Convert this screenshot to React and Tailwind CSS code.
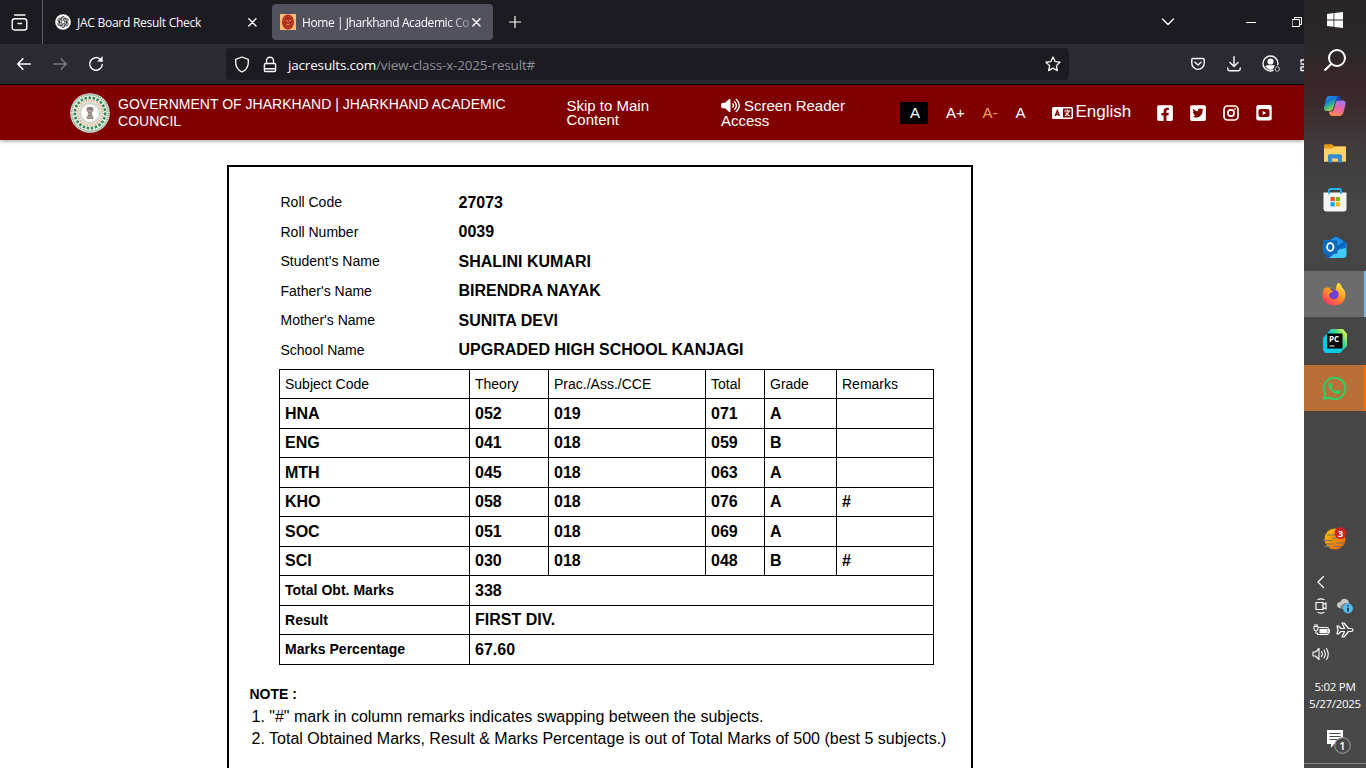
import React from "react";
import { FaFacebookSquare, FaTwitterSquare, FaWhatsapp } from "react-icons/fa";
import { FaVolumeHigh } from "react-icons/fa6";

const info = [
  ["Roll Code", "27073", "h-[29px]", "pt-px"],
  ["Roll Number", "0039", "h-[30px]", "pt-[2px]"],
  ["Student's Name", "SHALINI KUMARI", "h-[29px]", "pt-px"],
  ["Father's Name", "BIRENDRA NAYAK", "h-[30px]", "pt-[2px]"],
  ["Mother's Name", "SUNITA DEVI", "h-[29px]", "pt-px"],
  ["School Name", "UPGRADED HIGH SCHOOL KANJAGI", "h-[30px]", "pt-[2px]"],
];

const marks = [
  ["HNA", "052", "019", "071", "A", "", "h-[30px]"],
  ["ENG", "041", "018", "059", "B", "", "h-[29px]"],
  ["MTH", "045", "018", "063", "A", "", "h-[30px]"],
  ["KHO", "058", "018", "076", "A", "#", "h-[29px]"],
  ["SOC", "051", "018", "069", "A", "", "h-[30px]"],
  ["SCI", "030", "018", "048", "B", "#", "h-[29px]"],
];

const summary = [
  ["Total Obt. Marks", "338", "h-[30px]", "pb-[2px]"],
  ["Result", "FIRST DIV.", "h-[29px]", "pb-0"],
  ["Marks Percentage", "67.60", "h-[30px]", "pb-[2px]"],
];

const cols = ["w-[190px]", "w-[79px]", "w-[157px]", "w-[59px]", "w-[72px]", "w-[97px]"];

function Line({ children, w = 16, h = 16, vb = "0 0 16 16", sw = 1.3, className = "" }) {
  return (
    <svg width={w} height={h} viewBox={vb} fill="none" stroke="currentColor" strokeWidth={sw} strokeLinecap="round" strokeLinejoin="round" className={"shrink-0 " + className}>
      {children}
    </svg>
  );
}

function Close() {
  return (
    <Line w={9} h={9} vb="0 0 9 9" sw={1.4}><path d="M.8.8l7.2 7.2M8 .8L.8 8" /></Line>
  );
}

function TabBar() {
  return (
    <div className="flex h-11 bg-[#1c1b22] font-['Open_Sans',sans-serif] text-[12px] text-[#fbfbfe]">
      <div className="flex w-[42px] shrink-0 items-center pl-[11px]">
        <Line w={17} h={17} vb="0 0 17 17" sw={1.4}>
          <path d="M3.6 1h10.3" />
          <path d="M1.2 7.5q0-2.7 2.500-2.700h9.600q2.500 0 2.500 2.700v6q0 2.500-2.500 2.500h-9.600q-2.500 0-2.500-2.500z" /><path d="M7 9.500h3.500" />
        </Line>
      </div>
      <div className="w-px bg-[#5b5b66]" />
      <div className="flex w-[221px] items-center pl-[12px]">
        <svg width="16" height="16" viewBox="0 0 16 16" className="shrink-0">
          <circle cx="8" cy="8" r="7.800" fill="#fff" />
          <g fill="none" stroke="#222" strokeWidth=".75">
            {[0, 60, 120, 180, 240, 300].map((a) => (
              <path key={a} transform={`rotate(${a} 8 8)`} d="M6 7V4.300a2.100 2.100 0 0 1 4-.7M6 4.800l2-1.100 2.800 1.600" />
            ))}
            <path d="M8 5.900l1.800 1v2.100L8 10.100 6.200 9V6.900z" />
          </g>
        </svg>
        <span className="ml-[6px] w-[170.500px] whitespace-nowrap pt-[2px] tracking-[-0.26px]">JAC Board Result Check</span>
        <Close />
      </div>
      <div className="ml-[8px] mt-[4px] flex h-[36px] w-[221px] items-center rounded-[4px] bg-[#52525e] pl-[8px]">
        <svg width="16" height="16" viewBox="0 0 16 16" className="shrink-0">
          <rect width="16" height="16" fill="#ffb870" />
          <ellipse cx="8" cy="8" rx="6" ry="7.500" fill="#a82a1c" />
          <ellipse cx="8" cy="8" rx="4.300" ry="5.500" fill="none" stroke="#d8683e" strokeWidth=".8" strokeDasharray="1.500 1" />
          <path d="M5.500 6.500h2M9 6.500h2M6 10q2 1.500 4 0M8 7v2" stroke="#f3a468" strokeWidth=".8" fill="none" />
        </svg>
        <span className="ml-[6px] w-[170px] overflow-hidden whitespace-nowrap pt-[2px] tracking-[-0.42px] [mask-image:linear-gradient(to_right,#000_145px,rgba(0,0,0,0.25)_170px)]">Home | Jharkhand Academic Co</span>
        <Close />
      </div>
      <div className="flex w-[44px] items-center justify-center"><Line w={12} h={12} vb="0 0 12 12" sw={1.200}><path d="M6 .5v11M.5 6h11" /></Line></div>
      <div className="ml-auto flex w-[143px] shrink-0 items-center overflow-hidden">
        <Line w={14} h={8} vb="0 0 14 8" sw={1.300}><path d="M1.500 1L7 6.500 12.500 1" /></Line>
        <div className="ml-[71px] h-px w-[10px] shrink-0 bg-white" />
        <Line w={12} h={12} vb="0 0 12 12" sw={1} className="ml-[36px]"><path d="M.5 3.500h7v7h-7zM2.500 3V1.500h7v7H8" strokeLinejoin="miter" /></Line>
      </div>
    </div>
  );
}

function Toolbar() {
  return (
    <div className="flex h-10 items-center bg-[#2b2a33] text-[#fbfbfe]">
      <Line w={14} h={12} vb="0 0 14 12" sw={1.500} className="ml-[17px]"><path d="M13.300 6H.8M5.800.9L.7 6l5.100 5.100" /></Line>
      <Line w={14} h={12} vb="0 0 14 12" sw={1.500} className="ml-[22px] text-[#77767e]"><path d="M.7 6h12.500M8.200.9L13.300 6l-5.100 5.100" /></Line>
      <Line w={16} h={16} sw={1.500} className="ml-[21px]"><path d="M14.300 8.500a6.300 6.300 0 1 1-2.100-5.300L14 5" /><path d="M14.300 1v4.300H10z" fill="currentColor" strokeWidth=".6" /></Line>
      <div className="ml-[122px] flex h-8 w-[843px] items-center rounded-[4px] bg-[#1c1b22]">
        <Line w={16} h={17} vb="0 0 16 17" className="ml-[8px]"><path d="M8 1l6.300 2.300v3.200c0 4.500-2.300 7.500-6.300 9.500-4-2-6.300-5-6.300-9.500V3.300z" /></Line>
        <Line w={14} h={17} vb="0 0 14 17" className="ml-[13px]" sw={1.400}><path d="M3.500 7.500V4.800a3.500 3.500 0 0 1 7 0v2.700M2.700 7.500h8.600q1.300 0 1.300 1.300v5.400q0 1.300-1.300 1.300H2.700q-1.300 0-1.300-1.300V8.800q0-1.300 1.300-1.300zM1.500 12.800h11" /></Line>
        <span className="ml-[11px] flex-1 whitespace-nowrap pt-[2px] font-['Open_Sans',sans-serif] text-[13.500px] tracking-[-0.17px]">jacresults.com<span className="text-[#8f8f97]">/view-class-x-2025-result#</span></span>
        <Line w={16} h={16} className="mr-[8px]"><path d="M8 1l2.100 4.600 4.900.6-3.600 3.400.9 5L8 12.100l-4.300 2.500.9-5L1 6.200l4.900-.6z" /></Line>
      </div>
      <div className="ml-auto flex w-[113px] shrink-0 items-center overflow-hidden">
        <Line w={14} h={14} vb="0 0 14 14" sw={1.400}><path d="M2 1.500h10q1.200 0 1.200 1.200v3.500a6.200 6.200 0 0 1-12.400 0V2.700Q.8 1.500 2 1.500z" /><path d="M4 5.300l3 2.800 3-2.800" /></Line>
        <Line w={14} h={16} vb="0 0 14 16" sw={1.400} className="ml-[22px]"><path d="M7 .8v9.500M3 6.500l4 4 4-4M.8 12v1q0 1.700 1.700 1.700h9q1.700 0 1.700-1.700v-1" /></Line>
        <Line w={19} h={18} vb="0 0 19 18" sw={1.400} className="ml-[21px]">
          <circle cx="8.500" cy="8.500" r="7.500" /><circle cx="8.500" cy="6.500" r="2.400" fill="currentColor" /><path d="M4 11.500q0-1 1-1h7q1 0 1 1-1.500 3-4.500 3T4 11.500z" fill="currentColor" strokeWidth=".6" />
          <circle cx="15.200" cy="14" r="3.800" fill="#2b2a33" stroke="none" /><circle cx="15.300" cy="14" r="2.300" strokeWidth="1" stroke="#bbb" />
        </Line>
        <Line w={14} h={16} vb="0 0 14 16" sw={1.400} className="ml-[19px]"><path d="M1 6V4h3.500V2.500q0-1 2-1M1 8h2q1.500 0 1.500 1.500T3 11H1v3.500h5" /></Line>
      </div>
    </div>
  );
}

function Emblem() {
  return (
    <svg width="40" height="40" viewBox="0 0 40 40" className="shrink-0">
      <circle cx="20" cy="20" r="19.800" fill="#eef0e8" />
      <circle cx="20" cy="20" r="18.300" fill="none" stroke="#7fa78c" strokeWidth="1.800" strokeDasharray="1.200 .8" />
      <circle cx="20" cy="20" r="15.200" fill="none" stroke="#2f8a57" strokeWidth="2.600" strokeDasharray="2.500 1.600" />
      <circle cx="20" cy="20" r="12.500" fill="none" stroke="#eba582" strokeWidth="1.800" strokeDasharray="1.500 1.200" />
      <circle cx="20" cy="20" r="10" fill="none" stroke="#c3c7be" strokeWidth="2" strokeDasharray="1.400 .7" />
      <circle cx="20" cy="20" r="8" fill="#fff" />
      <path d="M17 14.500q3-1.500 6 0l.6 3-1.600 2 .3 3.500h1v3h-6.600v-3h1l.3-3.500-1.600-2z" fill="#8a817c" />
      <path d="M17 18h6M17.500 21h5M16.500 24h7" stroke="#d8d2cd" strokeWidth=".7" />
    </svg>
  );
}

function Header() {
  return (
    <header className="flex h-[55px] shrink-0 bg-[#800000] font-['Liberation_Sans',Arial,sans-serif] text-white shadow-[0_1px_4px_rgba(0,0,0,0.4)]">
      <div className="ml-[70px] mt-[8px] w-[48px]"><Emblem /></div>
      <div className="mt-[11px] w-[448.500px] text-[14px] leading-[17px] tracking-[0.02px]">GOVERNMENT OF JHARKHAND | JHARKHAND ACADEMIC<br />COUNCIL</div>
      <div className="mt-[14px] w-[154.500px] text-[15px] leading-[14px]">Skip to Main<br />Content</div>
      <div className="mt-[13px] w-[179px] text-[15px] leading-[15px]">
        <div className="flex items-center gap-[4px]"><FaVolumeHigh size={19} className="h-[15px] w-[19px]" />Screen Reader</div>
        Access
      </div>
      <div className="mt-[17px] flex h-[22px] items-center text-[15px]">
        <span className="flex h-[22px] w-[28px] items-center justify-center bg-black pl-[2px]">A</span>
        <span className="ml-[18px] w-[36.500px]">A+</span>
        <span className="w-[33px] text-[#f0a060]">A-</span>
        <span className="w-[36px]">A</span>
        <svg width="21" height="12" viewBox="0 0 21 12" className="shrink-0">
          <rect width="21" height="12" rx="1.500" fill="#fff" />
          <path d="M3.200 9l2.100-5.500L7.400 9M4 7.500h2.600" fill="none" stroke="#800000" strokeWidth="1.300" />
          <rect x="11" y="1.500" width="8.500" height="9" fill="#800000" />
          <path d="M12.300 4h6M15.300 2.400V4M17 4.200q-1 3.300-4 4.800M13.700 5.500q1 2.400 4.300 3.500" fill="none" stroke="#fff" strokeWidth="1.100" />
        </svg>
        <span className="ml-[3px] mt-[-2px] w-[80.500px] text-[17px]">English</span>
        <div className="flex items-center gap-[15px] text-[18px]">
          <FaFacebookSquare /><FaTwitterSquare />
          <svg width="18" height="18" viewBox="0 0 18 18" fill="none" stroke="#fff" strokeWidth="1.700"><rect x="2" y="2" width="14" height="14" rx="3.500" /><circle cx="9" cy="9" r="3.100" /><circle cx="13" cy="5" r=".5" fill="#fff" strokeWidth=".7" /></svg>
          <svg width="18" height="18" viewBox="0 0 18 18"><rect x="1.300" y="1" width="15.400" height="15.500" rx="2" fill="#fff" /><rect x="3.500" y="5" width="11" height="8" rx="2" fill="#800000" /><path d="M7.700 6.900v4.200L11.400 9z" fill="#fff" /></svg>
        </div>
      </div>
    </header>
  );
}

function Result() {
  return (
    <main className="flex flex-1 flex-col overflow-hidden bg-white pl-[227px] pt-[25px] font-['Liberation_Sans',Arial,sans-serif] text-black">
      <section className="h-[640px] w-[746px] shrink-0 border-2 border-black pt-[21px]">
        <div className="ml-[51.500px]">
          {info.map(([label, value, h, pad]) => (
            <div key={label} className={"flex items-start pt-[3px] " + h}>
              <span className={"w-[178px] text-[14px] leading-[21px] " + pad}>{label}</span>
              <span className="whitespace-nowrap text-[16px] font-bold leading-[24px]">{value}</span>
            </div>
          ))}
        </div>
        <table className="ml-[50px] mt-[4px] w-[655px] table-fixed border-collapse text-left text-[16px] leading-[20px] [&_td]:border [&_td]:border-black [&_td]:pl-[5px] [&_td]:pt-0 [&_th]:border [&_th]:border-black [&_th]:py-0 [&_th]:pl-[5px]">
          <colgroup>{cols.map((c) => <col key={c} className={c} />)}</colgroup>
          <thead>
            <tr className="h-[29px] text-[14px]">
              {["Subject Code", "Theory", "Prac./Ass./CCE", "Total", "Grade", "Remarks"].map((t) => <th key={t} className="font-normal">{t}</th>)}
            </tr>
          </thead>
          <tbody className="font-bold">
            {marks.map((r) => (
              <tr key={r[0]} className={r[6]}>{r.slice(0, 6).map((c, i) => <td key={i} className="pb-0">{c}</td>)}</tr>
            ))}
            {summary.map(([k, v, h, pad]) => (
              <tr key={k} className={h}><td className={"text-[14px] tracking-[0.02px] " + pad}>{k}</td><td colSpan={5} className="pb-0">{v}</td></tr>
            ))}
          </tbody>
        </table>
        <div className="ml-[20.500px] mt-[18px] text-[16px] leading-[22px]">
          <div className="mb-px text-[14px] font-bold">NOTE :</div>
          <div className="ml-[2px] whitespace-nowrap">1. "#" mark in column remarks indicates swapping between the subjects.</div>
          <div className="ml-[2px] whitespace-nowrap tracking-[0.01px]">2. Total Obtained Marks, Result &amp; Marks Percentage is out of Total Marks of 500 (best 5 subjects.)</div>
        </div>
      </section>
    </main>
  );
}

function Slot({ children, className = "h-[47px]" }) {
  return <div className={"flex shrink-0 items-center justify-center " + className}>{children}</div>;
}

function Taskbar() {
  return (
    <aside className="flex w-[62px] shrink-0 flex-col bg-[linear-gradient(to_bottom,#272526_0px,#2c2728_50px,#382627_75px,#3b292b_100px,#403c3d_150px,#454545_200px,#484848_768px)] text-white">
      <div className="flex h-[36px] shrink-0 items-end justify-center pb-[8px]">
        <svg width="16" height="16" viewBox="0 0 16 16" fill="#fff"><path d="M0 2l6.500-.9v6.400H0zM7.300 1L16 0v7.500H7.300zM0 8.400h6.500v6.400L0 14zM7.300 8.400H16V16l-8.700-1z" /></svg>
      </div>
      <Slot>
        <svg width="24" height="24" viewBox="0 0 24 24" fill="none" stroke="#fff" strokeWidth="2"><circle cx="14" cy="10" r="8" /><path d="M8.200 16L1.500 22.500" strokeWidth="2.200" /></svg>
      </Slot>
      <Slot className="h-[47px] pb-[2px]">
        <svg width="24" height="22" viewBox="0 0 24 22">
          <defs>
            <linearGradient id="cb" x1="0" y1="0" x2=".6" y2="1"><stop stopColor="#19a7f2" /><stop offset=".35" stopColor="#1574d4" /><stop offset=".65" stopColor="#3dbd86" /><stop offset="1" stopColor="#e7cb2b" /></linearGradient>
            <linearGradient id="cp" x1=".6" y1="0" x2=".3" y2="1"><stop stopColor="#a873ef" /><stop offset=".5" stopColor="#ee65aa" /><stop offset="1" stopColor="#ff8b48" /></linearGradient>
          </defs>
          <path d="M6 1h8.500q2 0 2.500 2l.6 2h-3q-2 0-2.600 2.200l-1.700 6Q9.500 16 7 16H3.500Q.5 16 1 12.500l2-8.500q.8-3 3-3z" fill="url(#cb)" />
          <path d="M14 5.500h5.800q3.500 0 2.800 3.500l-2 8q-1 4-4.500 4h-7q-2 0-2.600-2L6 16.500h2.300q2 0 2.600-2.200l1.500-5.500q.8-3.300 1.600-3.300z" fill="url(#cp)" />
          <path d="M14.500 1q2 0 2.500 2l.6 2.500H14q-1.300 0-1.700 1z" fill="#153cc5" />
        </svg>
      </Slot>
      <Slot>
        <svg width="22" height="19" viewBox="0 0 22 19"><path d="M0 1.500Q0 .3 1.200.3h7l1.700 2.200H22V8H0z" fill="#e69c12" /><path d="M0 4.500h8l2-2h12v15.300H0z" fill="#ffd365" /><path d="M4 18.500v-6.800q0-1.500 1.500-1.500h11q1.500 0 1.500 1.500v6.800h-4v-4H8v4z" fill="#3789d2" /></svg>
      </Slot>
      <Slot className="h-[47px] pb-[2px]">
        <svg width="24" height="24" viewBox="0 0 24 24"><path d="M.5 4.500h23v16q0 3-3 3h-17q-3 0-3-3z" fill="#f5f5f5" /><path d="M6 6V2.500Q6 1 7.500 1h9Q18 1 18 2.500V6" fill="none" stroke="#28b5e9" strokeWidth="1.800" /><path d="M7.500 9h4.200v4.200H7.500z" fill="#f25022" /><path d="M12.700 9h4.200v4.200h-4.200z" fill="#7fba00" /><path d="M7.500 14.200h4.200v4.200H7.500z" fill="#00a4ef" /><path d="M12.700 14.200h4.200v4.200h-4.200z" fill="#ffb900" /></svg>
      </Slot>
      <Slot className="h-[47px] pb-[2px]">
        <svg width="24" height="24" viewBox="0 0 24 24"><path d="M2.500 7.500L13 1l10 6v12q0 4-4 4H6q-3.500 0-3.500-4z" fill="#0b62be" /><path d="M5 6.500L13 1.500l8 5-7.500 5z" fill="#2492e3" /><path d="M23.500 8v11.500q0 3.500-4 3.500H6l10-8.500z" fill="#43c9f5" /><path d="M15 14.500L23.500 8v5z" fill="#126cc5" /><rect y="5" width="14.500" height="14" rx="1.500" fill="#0f6cbd" /><ellipse cx="7.300" cy="12" rx="3.200" ry="3.800" fill="none" stroke="#fff" strokeWidth="1.800" /></svg>
      </Slot>
      <Slot className="h-[46px] border-r-2 border-[#76b9ed] bg-[#6c6c6c]">
        <svg width="24" height="24" viewBox="0 0 24 24">
          <defs><linearGradient id="ff" x1=".8" y1="0" x2=".2" y2="1"><stop stopColor="#fff044" /><stop offset=".45" stopColor="#ff981f" /><stop offset="1" stopColor="#ff2d68" /></linearGradient></defs>
          <path d="M16.500.5q3 2 3.500 5 3.500 3 3.500 7.500Q22.500 23.500 12 23.500.5 22.500.5 12.500q0-4 2-7l.6 1.500L5 3.800l.5 2.200 3-.8Q7 9 10.500 8.800q3.200.4 3.500-2.800-.2-3 2.500-5.500z" fill="url(#ff)" /><circle cx="11.800" cy="12.500" r="4.800" fill="#733ed4" /><path d="M5 9q3-2.500 6 .5L8 11.300 6 14z" fill="#ff9a22" />
        </svg>
      </Slot>
      <Slot className="h-[48px]">
        <svg width="24" height="24" viewBox="0 0 24 24"><defs><linearGradient id="pc" x1="0" y1=".8" x2="1" y2=".1"><stop stopColor="#07c3f2" /><stop offset=".5" stopColor="#12cdd0" /><stop offset=".7" stopColor="#4bdc80" /><stop offset="1" stopColor="#fcf84a" /></linearGradient></defs><path d="M8 0h12l4 5v12l-7 7H2l-2-3V9z" fill="url(#pc)" /><rect x="4" y="4.500" width="15.500" height="15" fill="#050505" /><path d="M6.500 17h5" stroke="#fff" strokeWidth="1" /><text x="6" y="12.500" fill="#fff" fontSize="8" fontWeight="700" fontFamily="Open Sans">PC</text></svg>
      </Slot>
      <Slot className="h-[46px] border-r-2 border-[#ff6c00] bg-[#b87038]"><FaWhatsapp size={27} color="#25d366" /></Slot>
      <div className="flex h-[143px] shrink-0 items-end justify-center pb-[2px]">
        <svg width="26" height="26" viewBox="0 0 26 26">
          <defs><linearGradient id="gl" x1="0" y1="0" x2="1" y2="1"><stop stopColor="#ffc700" /><stop offset="1" stopColor="#f05a00" /></linearGradient></defs>
          <circle cx="13" cy="13" r="10.500" fill="url(#gl)" /><path d="M5 9h9M10 12h12M1 14.500h10M4 18h8M14 17h8M2 20.500h6M12 20.500h8" stroke="#77726a" strokeWidth="1.200" />
          <circle cx="18.500" cy="7" r="6" fill="#c82424" /><text x="18.500" y="10.500" textAnchor="middle" fill="#fff" fontSize="9" fontWeight="700" fontFamily="Open Sans">3</text>
        </svg>
      </div>
      <div className="flex h-[40px] shrink-0 items-start pl-[12px] pt-[21px]"><Line w={9} h={14} vb="0 0 9 14" sw={1.300}><path d="M7.500 1.500L2 7l5.500 5.500" /></Line></div>
      <div className="grid h-[72px] shrink-0 grid-cols-[24px_24px] grid-rows-[24px_24px_24px] place-items-center pl-[5px]">
        <Line w={14} h={16} vb="0 0 14 16" sw={1.200}><path d="M4 1.500q3-1.200 6 0M4 14.500q3 1.200 6 0M2 4.500h7v7H2zM9 6.500L12 5v6L9 9.500" /></Line>
        <svg width="18" height="16" viewBox="0 0 18 16"><path d="M3 10q-2-1-2-3 0-3 3.500-3Q6 0 9.500 1q3 .5 3.500 4l-4 6z" fill="#c9c9c9" /><path d="M4 9q4-5 8-4l-3 6H5z" fill="#888" /><circle cx="12" cy="10.500" r="4.900" fill="#50bdef" /><path d="M12 9.700v4M12 7.300v1.300" stroke="#123" strokeWidth="1.500" /></svg>
        <Line w={17} h={13} vb="0 0 17 13" sw={1.100}><path d="M6.500 3.500h8.500v7H4.500V9M15 5.500h1.300v3H15M1 2.500h4V5q0 1.500-2 1.500T1 5zM2 .5v2M4 .5v2M3 6.500v3" /><path d="M7 5.500h6.500v3.300H7z" fill="currentColor" /></Line>
        <Line w={18} h={16} vb="0 0 18 16" sw={1.200}><path d="M1 4h1.500L5 6.500h3.500L6 1h2l4.500 5.500H15q2 0 2 1.500t-2 1.500h-2.500L8 15H6l2.500-5.500H5L2.500 12H1l1-4z" /></Line>
        <Line w={18} h={14} vb="0 0 18 14" sw={1.100}><path d="M1 5h2.500L7 1.500v11L3.500 9H1zM9.500 4.500q1.500 2.500 0 5M12 3q2.500 4 0 8M14.500 1.500q3.500 5.500 0 11" /></Line>
      </div>
      <div className="mt-[12px] shrink-0 text-center font-['Open_Sans',sans-serif] text-[11.500px] leading-[17px] tracking-[-0.3px]">5:02 PM<br />5/27/2025</div>
      <div className="mt-[17px] flex h-[34px] shrink-0 items-start pl-[22px]">
        <svg width="27" height="27" viewBox="0 0 27 27"><path d="M1 1h16v14h-9l-3 4v-4H1z" fill="#fff" /><path d="M3.500 4.500h11M3.500 7.500h11M3.500 10.500h11" stroke="#484848" /><circle cx="16.500" cy="16.500" r="7.800" fill="#484848" stroke="#a5a5a5" /><text x="16.500" y="20.500" textAnchor="middle" fill="#fff" fontSize="11" fontWeight="600" fontFamily="Open Sans">1</text></svg>
      </div>
      <div className="h-px shrink-0 bg-[#838383]" />
    </aside>
  );
}

export default function App() {
  return (
    <div className="flex h-[768px] w-[1366px] overflow-hidden">
      <div className="flex w-[1304px] shrink-0 flex-col overflow-hidden">
        <div className="shrink-0"><TabBar /><Toolbar /><div className="h-px bg-[#0c0c0d]" /></div>
        <div className="z-10"><Header /></div>
        <Result />
      </div>
      <Taskbar />
    </div>
  );
}
